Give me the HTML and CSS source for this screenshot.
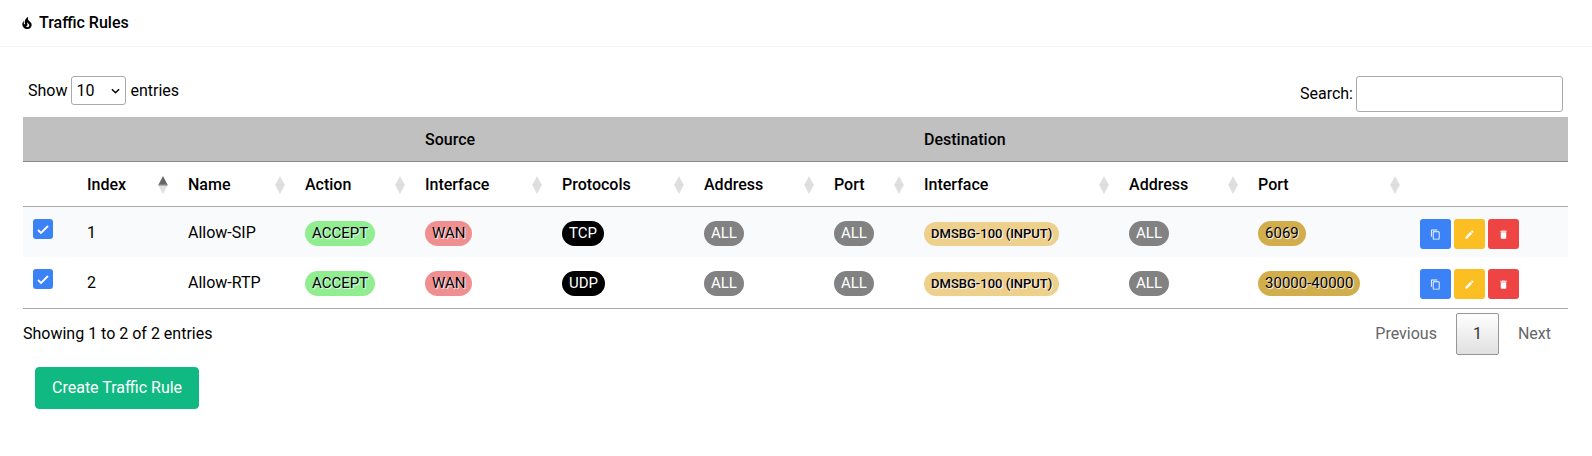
FILE: index.html
```html
<!DOCTYPE html>
<html lang="en">
<head>
<meta charset="utf-8">
<title>Traffic Rules</title>
<link rel="stylesheet" href="styles.css">
</head>
<body>
<svg class="sprite" aria-hidden="true">
  <symbol id="copy" viewBox="0 0 24 24"><path d="M19,21H8V7H19M19,5H8A2,2 0 0,0 6,7V21A2,2 0 0,0 8,23H19A2,2 0 0,0 21,21V7A2,2 0 0,0 19,5M16,1H4A2,2 0 0,0 2,3V17H4V3H16V1Z"/></symbol>
  <symbol id="pencil" viewBox="0 0 24 24"><path d="M20.71,7.04C21.1,6.65 21.1,6 20.71,5.63L18.37,3.29C18,2.9 17.35,2.9 16.96,3.29L15.12,5.12L18.87,8.87M3,17.25V21H6.75L17.81,9.93L14.06,6.18L3,17.25Z"/></symbol>
  <symbol id="trash" viewBox="0 0 24 24"><path d="M19,4H15.5L14.5,3H9.5L8.5,4H5V6H19M6,19A2,2 0 0,0 8,21H16A2,2 0 0,0 18,19V7H6V19Z"/></symbol>
  <symbol id="sort" viewBox="0 0 10 18"><path class="up" d="M5 0L9.6 8.8H.4Z"/><path class="down" d="M.4 9.2H9.6L5 18Z"/><path class="mid" d="M.4 8.5H9.6V9.5H.4Z"/></symbol>
</svg>
<header class="card-header">
  <svg class="fire" viewBox="0 0 24 24" aria-hidden="true"><path d="M17.66 11.2C17.43 10.9 17.15 10.64 16.89 10.38C16.22 9.78 15.46 9.35 14.82 8.72C13.33 7.26 13 4.85 13.95 3C13 3.23 12.17 3.75 11.46 4.32C8.87 6.4 7.85 10.07 9.07 13.22C9.11 13.32 9.15 13.42 9.15 13.55C9.15 13.77 9 13.97 8.8 14.05C8.57 14.15 8.33 14.09 8.14 13.93C8.08 13.88 8.04 13.83 8 13.76C6.87 12.33 6.69 10.28 7.45 8.64C5.78 10 4.87 12.3 5 14.47C5.06 14.97 5.12 15.47 5.29 15.97C5.43 16.57 5.7 17.17 6 17.7C7.08 19.43 8.95 20.67 10.96 20.92C13.1 21.19 15.39 20.8 17.03 19.32C18.86 17.66 19.5 15 18.56 12.72L18.43 12.46C18.22 12 17.66 11.2 17.66 11.2M14.5 17.5C14.22 17.74 13.76 18 13.4 18.1C12.28 18.5 11.16 17.94 10.5 17.28C11.69 17 12.4 16.12 12.61 15.23C12.78 14.43 12.46 13.77 12.33 13C12.21 12.26 12.23 11.63 12.5 10.94C12.69 11.32 12.89 11.7 13.13 12C13.9 13 15.11 13.44 15.37 14.8C15.41 14.94 15.43 15.08 15.43 15.23C15.46 16.05 15.1 16.95 14.5 17.5Z"/></svg>
  <h1 class="title">Traffic Rules</h1>
</header>
<main class="content">
  <div class="toolbar">
    <label class="length">Show
      <select class="select"><option>10</option><option>25</option><option>50</option></select>
      entries</label>
    <label class="filter">Search: <input class="search" type="search"></label>
  </div>
  <table class="rules">
    <colgroup>
      <col class="c-check"><col class="c-index"><col class="c-name"><col class="c-action"><col class="c-src-if"><col class="c-proto"><col class="c-src-addr"><col class="c-src-port"><col class="c-dst-if"><col class="c-dst-addr"><col class="c-dst-port"><col class="c-tools">
    </colgroup>
    <thead>
      <tr class="groups"><th colspan="4"></th><th colspan="4">Source</th><th colspan="4">Destination</th></tr>
      <tr class="heads">
        <th></th>
        <th><div class="head">Index <svg class="sort asc"><use href="#sort"/></svg></div></th>
        <th><div class="head">Name <svg class="sort"><use href="#sort"/></svg></div></th>
        <th><div class="head">Action <svg class="sort"><use href="#sort"/></svg></div></th>
        <th><div class="head">Interface <svg class="sort"><use href="#sort"/></svg></div></th>
        <th><div class="head">Protocols <svg class="sort"><use href="#sort"/></svg></div></th>
        <th><div class="head">Address <svg class="sort"><use href="#sort"/></svg></div></th>
        <th><div class="head">Port <svg class="sort"><use href="#sort"/></svg></div></th>
        <th><div class="head">Interface <svg class="sort"><use href="#sort"/></svg></div></th>
        <th><div class="head">Address <svg class="sort"><use href="#sort"/></svg></div></th>
        <th><div class="head">Port <svg class="sort"><use href="#sort"/></svg></div></th>
        <th></th>
      </tr>
    </thead>
    <tbody>
      <tr>
        <td><input class="check" type="checkbox" checked aria-label="Enable Allow-SIP"></td>
        <td>1</td><td>Allow-SIP</td>
        <td><span class="badge green">ACCEPT</span></td>
        <td><span class="badge coral">WAN</span></td>
        <td><span class="badge black">TCP</span></td>
        <td><span class="badge gray">ALL</span></td>
        <td><span class="badge gray">ALL</span></td>
        <td><span class="badge sand">DMSBG-100 (INPUT)</span></td>
        <td><span class="badge gray">ALL</span></td>
        <td><span class="badge gold">6069</span></td>
        <td><div class="tools">
          <button class="tool blue" aria-label="Copy"><svg class="icon"><use href="#copy"/></svg></button>
          <button class="tool yellow" aria-label="Edit"><svg class="icon"><use href="#pencil"/></svg></button>
          <button class="tool red" aria-label="Delete"><svg class="icon"><use href="#trash"/></svg></button>
        </div></td>
      </tr>
      <tr>
        <td><input class="check" type="checkbox" checked aria-label="Enable Allow-RTP"></td>
        <td>2</td><td>Allow-RTP</td>
        <td><span class="badge green">ACCEPT</span></td>
        <td><span class="badge coral">WAN</span></td>
        <td><span class="badge black">UDP</span></td>
        <td><span class="badge gray">ALL</span></td>
        <td><span class="badge gray">ALL</span></td>
        <td><span class="badge sand">DMSBG-100 (INPUT)</span></td>
        <td><span class="badge gray">ALL</span></td>
        <td><span class="badge gold">30000-40000</span></td>
        <td><div class="tools">
          <button class="tool blue" aria-label="Copy"><svg class="icon"><use href="#copy"/></svg></button>
          <button class="tool yellow" aria-label="Edit"><svg class="icon"><use href="#pencil"/></svg></button>
          <button class="tool red" aria-label="Delete"><svg class="icon"><use href="#trash"/></svg></button>
        </div></td>
      </tr>
    </tbody>
  </table>
  <div class="footer">
    <div class="info">Showing 1 to 2 of 2 entries</div>
    <nav class="pages">
      <button class="page" disabled>Previous</button>
      <button class="page current">1</button>
      <button class="page" disabled>Next</button>
    </nav>
  </div>
  <button class="create">Create Traffic Rule</button>
</main>
</body>
</html>
```

FILE: styles.css
```css
* { box-sizing: border-box; }
body {
  margin: 0;
  background: #fff;
  color: #000;
  font: 16px/24px Roboto, sans-serif;
}
button, input, select { font: inherit; color: inherit; margin: 0; }
.sprite { position: absolute; width: 0; height: 0; }

.card-header {
  display: flex;
  align-items: center;
  gap: 4px;
  padding: 11px 19px;
  border-bottom: 1px solid #f3f4f6;
}
.fire { width: 16px; height: 16px; }
.title { margin: 0; font-size: 16px; font-weight: 500; }

.content { padding: 29px 24px 0 23px; }
.toolbar {
  display: flex;
  justify-content: space-between;
  align-items: flex-start;
  padding: 0 5px;
  margin-bottom: 5px;
}
.length, .filter { display: flex; align-items: center; gap: 4px; }
.filter { gap: 3px; }
.select {
  appearance: none;
  width: 55px;
  height: 29px;
  padding: 0 4px;
  border: 1px solid #aaa;
  border-radius: 3px;
  background: url("data:image/svg+xml,%3Csvg xmlns='http://www.w3.org/2000/svg' viewBox='0 0 10 6'%3E%3Cpath d='M1 1l4 4 4-4' fill='none' stroke='%23000' stroke-width='1.6'/%3E%3C/svg%3E") no-repeat right 5px center / 9px 6px;
}
.search {
  width: 207px;
  height: 36px;
  padding: 5px;
  border: 1px solid #aaa;
  border-radius: 3px;
  background: transparent;
}

.rules {
  width: 100%;
  table-layout: fixed;
  border-collapse: separate;
  border-spacing: 0;
  border-bottom: 1px solid #aaa;
}
.c-check { width: 54px; }
.c-index { width: 101px; }
.c-name { width: 117px; }
.c-action { width: 120px; }
.c-src-if { width: 137px; }
.c-proto { width: 142px; }
.c-src-addr { width: 130px; }
.c-src-port { width: 90px; }
.c-dst-if { width: 205px; }
.c-dst-addr { width: 129px; }
.c-dst-port { width: 162px; }
.c-tools { width: 158px; }

.rules th { padding: 11px 10px 9px; text-align: left; font-weight: 500; }
.groups th { background: #c0c0c0; border-bottom: 1px solid #888; }
.heads th { border-bottom: 1px solid #aaa; }
.head { display: flex; justify-content: space-between; align-items: center; }
.sort { width: 10px; height: 18px; fill: #dfdfdf; }
.asc { --up: #666; --mid: #777; }
.up { fill: var(--up, #dfdfdf); }
.mid { fill: var(--mid, #d0d0d0); }
.rules td { padding: 12px 10px 8px; vertical-align: top; line-height: 28px; white-space: nowrap; }
.rules tbody tr:nth-child(odd) { background: #f9fafb; }
.rules tbody tr:last-child td { padding-bottom: 9px; }

.check {
  appearance: none;
  display: block;
  width: 20px;
  height: 20px;
  border-radius: 3px;
  background: #3b82f6 url("data:image/svg+xml,%3Csvg xmlns='http://www.w3.org/2000/svg' viewBox='0 0 20 20'%3E%3Cpath d='M5 11l3 3 7-7' fill='none' stroke='%23fff' stroke-width='1.8'/%3E%3C/svg%3E") center / 20px 20px;
}

.badge {
  display: inline-block;
  padding: 2px 7px 3px;
  border-radius: 13px;
  font-size: 15px;
  line-height: 20px;
  text-shadow: 1px 1px 1px #fff;
}
.green { background: #90ee90; }
.coral { background: #f08f8f; }
.black { background: #000; color: #fff; text-shadow: none; }
.gray { background: #828282; color: #fff; text-shadow: none; }
.sand { background: #eed08d; font-size: 13px; font-weight: 500; line-height: 19px; }
.gold { background: #d2ad4c; }

.tools { display: flex; gap: 3px; }
.tool {
  display: flex;
  align-items: center;
  justify-content: center;
  width: 31px;
  height: 30px;
  padding: 0;
  border: 0;
  border-radius: 3px;
  color: #fff;
}
.blue { background: #3b82f6; }
.yellow { background: #fbbf24; }
.red { background: #ef4444; }
.icon { width: 11px; height: 11px; fill: currentColor; }

.footer { display: flex; justify-content: space-between; align-items: center; padding-top: 4px; }
.pages { display: flex; gap: 2px; }
.page {
  min-width: 24px;
  height: 42px;
  padding: 0 16px;
  border: 1px solid transparent;
  border-radius: 2px;
  background: none;
  color: #666;
}
.current {
  border-color: #979797;
  background: linear-gradient(#fff, #e0e0e0);
  color: #333;
}
.create {
  margin: 12px;
  padding: 8px 16px;
  border: 1px solid #10b981;
  border-radius: 4px;
  background: #10b981;
  color: #fff;
}
```
